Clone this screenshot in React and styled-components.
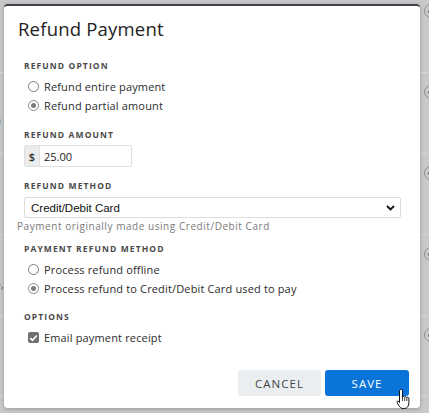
import React, { useState } from 'react';
import styled, { createGlobalStyle } from 'styled-components';

const GlobalStyle = createGlobalStyle`
  html, body {
    margin: 0;
    padding: 0;
    width: 429px;
    height: 413px;
    overflow: hidden;
    background: #c9c9c9;
    font-family: "Open Sans", "Noto Sans", sans-serif;
  }
`;

const Page = styled.div`
  position: relative;
  width: 429px;
  height: 413px;
  overflow: hidden;
  background: #c9c9c9;
`;

const BackList = styled.div`
  display: flex;
  flex-direction: column;
  margin-top: -8px;
`;

const BackRow = styled.div`
  height: 81px;
  border-bottom: 1px solid #d6d6d6;
  display: flex;
  align-items: flex-start;
  justify-content: space-between;
  padding-top: 12px;
  box-sizing: border-box;
  font-size: 12px;
  color: #6a6a6a;
`;

const BackText = styled.span`
  margin-left: -6px;
  margin-top: 28px;
`;

const BackCircle = styled.span`
  width: 14px;
  height: 14px;
  border: 1px solid #8f8f8f;
  border-radius: 50%;
  margin-right: -9px;
  display: flex;
  align-items: center;
  justify-content: flex-start;
  padding-left: 3px;
  box-sizing: border-box;

  &::after {
    content: '';
    width: 3px;
    height: 3px;
    border-radius: 50%;
    background: #7a6a5a;
  }
`;

const Modal = styled.div`
  position: absolute;
  left: 4px;
  top: 4px;
  width: 416px;
  height: 404px;
  box-sizing: border-box;
  background: #fff;
  border-top: 2px solid #3e444b;
  border-radius: 4px;
  box-shadow: 0 1px 4px rgba(0, 0, 0, 0.25);
  padding: 11px 11px 0 14px;
  display: flex;
  flex-direction: column;
`;

const Title = styled.h2`
  margin: 0;
  font-size: 18.5px;
  line-height: 24px;
  font-weight: 400;
  color: #222;
  letter-spacing: 0.2px;
`;

const Section = styled.div`
  display: flex;
  flex-direction: column;
  padding-left: 6px;
  margin-top: ${p => p.$gap || 13}px;
`;

const Label = styled.div`
  font-size: 8.5px;
  line-height: 12px;
  font-weight: 700;
  letter-spacing: 1.1px;
  color: #4a4a4a;
  text-transform: uppercase;
  margin-bottom: ${p => p.$after || 5}px;
`;

const OptionRow = styled.label`
  display: flex;
  align-items: center;
  gap: 5px;
  height: 19px;
  padding-left: 4px;
  font-size: 11px;
  color: #2c2c2c;
  letter-spacing: 0.15px;
  cursor: pointer;
`;

const Radio = styled.span`
  width: 11px;
  height: 11px;
  box-sizing: border-box;
  border-radius: 50%;
  border: 1px solid ${p => (p.$checked ? '#8a8a8a' : '#7a7a7a')};
  background: #fff;
  display: flex;
  align-items: center;
  justify-content: center;
  flex-shrink: 0;

  &::after {
    content: '';
    width: 5px;
    height: 5px;
    border-radius: 50%;
    background: ${p => (p.$checked ? '#7c7c7c' : 'transparent')};
  }
`;

const Checkbox = styled.span`
  width: 11px;
  height: 11px;
  border-radius: 2px;
  background: #6f6f6f;
  display: flex;
  align-items: center;
  justify-content: center;
  flex-shrink: 0;
`;

const InputGroup = styled.div`
  display: flex;
  width: 108px;
  height: 22px;
  border: 1px solid #e0e0e0;
  border-radius: 2px;
  box-sizing: border-box;
  font-size: 11px;
`;

const Addon = styled.span`
  width: 14px;
  background: #ececec;
  border-right: 1px solid #e0e0e0;
  display: flex;
  align-items: center;
  justify-content: center;
  color: #333;
  font-weight: 600;
`;

const AmountInput = styled.input`
  flex: 1;
  min-width: 0;
  border: none;
  outline: none;
  padding: 0 0 0 4px;
  font-family: "Open Sans", "Noto Sans", sans-serif;
  font-size: 11px;
  color: #222;
  background: #fff;
`;

const SelectBox = styled.div`
  width: 377px;
  height: 21px;
  box-sizing: border-box;
  border: 1px solid #dcdcdc;
  border-radius: 2px;
  display: flex;
  align-items: center;
  justify-content: space-between;
  padding: 0 5px 0 6px;
  font-family: "Liberation Sans", Arial, sans-serif;
  font-size: 11.5px;
  color: #111;
`;

const Help = styled.div`
  margin-left: -7px;
  margin-top: 1px;
  font-size: 10px;
  line-height: 14px;
  color: #7a7a7a;
  letter-spacing: 0.55px;
`;

const Footer = styled.div`
  margin-top: auto;
  margin-bottom: 12px;
  display: flex;
  justify-content: flex-end;
  gap: 4px;
`;

const Button = styled.button`
  width: ${p => p.$w}px;
  height: 26px;
  border: none;
  border-radius: 3px;
  font-family: "Open Sans", "Noto Sans", sans-serif;
  font-size: 11.5px;
  letter-spacing: 1px;
  cursor: pointer;
  background: ${p => (p.$primary ? '#0b74d8' : '#ebeef0')};
  color: ${p => (p.$primary ? '#fff' : '#444')};
`;

const Cursor = styled.svg`
  position: absolute;
  left: 396px;
  top: 388px;
  pointer-events: none;
`;

const Chevron = () => (
  <svg width="9" height="6" viewBox="0 0 9 6">
    <path d="M1 1 L4.5 4.5 L8 1" fill="none" stroke="#111" strokeWidth="1.8" />
  </svg>
);

const Check = () => (
  <svg width="9" height="8" viewBox="0 0 9 8">
    <path d="M1.2 4.2 L3.5 6.3 L7.8 1.5" fill="none" stroke="#fff" strokeWidth="1.6" />
  </svg>
);

const App = () => {
  const [option, setOption] = useState('partial');
  const [method, setMethod] = useState('card');
  const [amount, setAmount] = useState('25.00');

  return (
    <Page>
      <GlobalStyle />
      <BackList>
        {['c', '0', 'c', '5,', '('].map((t, i) => (
          <BackRow key={i}>
            <BackText>{t}</BackText>
            <BackCircle />
          </BackRow>
        ))}
      </BackList>

      <Modal>
        <Title>Refund Payment</Title>

        <Section $gap={19}>
          <Label>Refund Option</Label>
          <OptionRow onClick={() => setOption('entire')}>
            <Radio $checked={option === 'entire'} />
            Refund entire payment
          </OptionRow>
          <OptionRow onClick={() => setOption('partial')}>
            <Radio $checked={option === 'partial'} />
            Refund partial amount
          </OptionRow>
        </Section>

        <Section $gap={14}>
          <Label $after={4}>Refund Amount</Label>
          <InputGroup>
            <Addon>$</Addon>
            <AmountInput value={amount} onChange={e => setAmount(e.target.value)} />
          </InputGroup>
        </Section>

        <Section $gap={13}>
          <Label>Refund Method</Label>
          <SelectBox>
            Credit/Debit Card
            <Chevron />
          </SelectBox>
          <Help>Payment originally made using Credit/Debit Card</Help>
        </Section>

        <Section $gap={10}>
          <Label>Payment Refund Method</Label>
          <OptionRow onClick={() => setMethod('offline')}>
            <Radio $checked={method === 'offline'} />
            Process refund offline
          </OptionRow>
          <OptionRow onClick={() => setMethod('card')}>
            <Radio $checked={method === 'card'} />
            Process refund to Credit/Debit Card used to pay
          </OptionRow>
        </Section>

        <Section $gap={13}>
          <Label>Options</Label>
          <OptionRow>
            <Checkbox>
              <Check />
            </Checkbox>
            Email payment receipt
          </OptionRow>
        </Section>

        <Footer>
          <Button $w={83}>CANCEL</Button>
          <Button $w={84} $primary>SAVE</Button>
        </Footer>
      </Modal>

      <Cursor width="16" height="22" viewBox="0 0 16 22">
        <path
          d="M5 1.5 C5.9 1.5 6.5 2.1 6.5 3 L6.5 9 C6.8 8.3 8.3 8.2 8.6 9.2 C9 8.5 10.5 8.5 10.8 9.6 C11.2 9 12.8 9.1 12.9 10.4 L12.9 15 C12.9 18 11.2 20.5 8.5 20.5 L7 20.5 C5 20.5 3.8 19.2 2.8 17.6 L1.1 14.4 C0.7 13.6 1.3 12.8 2.1 13.1 C2.7 13.3 3.1 14 3.5 14.6 L3.5 3 C3.5 2.1 4.1 1.5 5 1.5 Z"
          fill="#fff"
          stroke="#111"
          strokeWidth="1"
        />
        <path d="M6.5 9 L6.5 13 M8.7 9.4 L8.7 13 M10.8 9.8 L10.8 13" stroke="#111" strokeWidth="0.8" />
      </Cursor>
    </Page>
  );
};

export default App;
